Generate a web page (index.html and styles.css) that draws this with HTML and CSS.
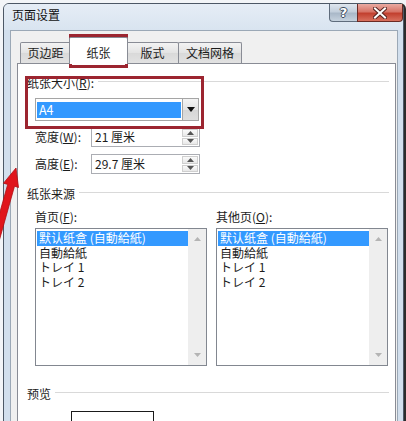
FILE: index.html
```html
<!DOCTYPE html>
<html lang="zh">
<head>
<meta charset="utf-8">
<title>页面设置</title>
<link rel="stylesheet" href="styles.css">
</head>
<body>
<div class="window">
  <div class="titlebar">
    <span class="title">页面设置</span>
    <div class="caption">
      <div class="cbtn help"><span class="qmark">?</span></div>
      <div class="cbtn close">
        <svg width="14" height="12" viewBox="0 0 14 12"><path d="M2 1.5 L12 10.5 M12 1.5 L2 10.5" stroke="#5a2320" stroke-width="4" stroke-linecap="square"/><path d="M2 1.5 L12 10.5 M12 1.5 L2 10.5" stroke="#ffffff" stroke-width="2" stroke-linecap="square"/></svg>
      </div>
    </div>
  </div>
  <div class="client">
    <div class="tabs">
      <div class="tab tab-margins">页边距</div>
      <div class="tab tab-paper active">纸张</div>
      <div class="tab tab-layout">版式</div>
      <div class="tab tab-grid">文档网格</div>
    </div>
    <div class="panel">
      <div class="ghead first"><span>纸张大小(<u>R</u>):</span><span class="rule"></span></div>
      <div class="combo">
        <div class="combo-value">A4</div>
        <div class="combo-btn"><svg width="8" height="5" viewBox="0 0 8 5"><path d="M0 0 H8 L4 5 Z" fill="#111"/></svg></div>
      </div>
      <div class="spin-row">
        <span class="spin-label">宽度(<u>W</u>):</span>
        <div class="spin">
          <span class="spin-value">21 厘米</span>
          <div class="spin-btns">
            <div class="sbtn"><svg width="7" height="4" viewBox="0 0 7 4"><path d="M0 4 H7 L3.5 0 Z" fill="#555"/></svg></div>
            <div class="sbtn"><svg width="7" height="4" viewBox="0 0 7 4"><path d="M0 0 H7 L3.5 4 Z" fill="#555"/></svg></div>
          </div>
        </div>
      </div>
      <div class="spin-row second">
        <span class="spin-label">高度(<u>E</u>):</span>
        <div class="spin">
          <span class="spin-value">29.7 厘米</span>
          <div class="spin-btns">
            <div class="sbtn"><svg width="7" height="4" viewBox="0 0 7 4"><path d="M0 4 H7 L3.5 0 Z" fill="#555"/></svg></div>
            <div class="sbtn"><svg width="7" height="4" viewBox="0 0 7 4"><path d="M0 0 H7 L3.5 4 Z" fill="#555"/></svg></div>
          </div>
        </div>
      </div>
      <div class="ghead source-head"><span>纸张来源</span><span class="rule"></span></div>
      <div class="sources">
        <div class="src-col">
          <div class="src-label">首页(<u>F</u>):</div>
          <div class="listbox">
            <div class="items">
              <div class="item selected">默认纸盒 (自動給紙)</div>
              <div class="item">自動給紙</div>
              <div class="item">トレイ 1</div>
              <div class="item">トレイ 2</div>
            </div>
            <div class="vscroll">
              <div class="arrow"><svg width="7" height="4" viewBox="0 0 7 4"><path d="M0 4 H7 L3.5 0 Z" fill="#b4b4b4"/></svg></div>
              <div class="arrow"><svg width="7" height="4" viewBox="0 0 7 4"><path d="M0 0 H7 L3.5 4 Z" fill="#b4b4b4"/></svg></div>
            </div>
          </div>
        </div>
        <div class="src-col">
          <div class="src-label">其他页(<u>O</u>):</div>
          <div class="listbox">
            <div class="items">
              <div class="item selected">默认纸盒 (自動給紙)</div>
              <div class="item">自動給紙</div>
              <div class="item">トレイ 1</div>
              <div class="item">トレイ 2</div>
            </div>
            <div class="vscroll">
              <div class="arrow"><svg width="7" height="4" viewBox="0 0 7 4"><path d="M0 4 H7 L3.5 0 Z" fill="#b4b4b4"/></svg></div>
              <div class="arrow"><svg width="7" height="4" viewBox="0 0 7 4"><path d="M0 0 H7 L3.5 4 Z" fill="#b4b4b4"/></svg></div>
            </div>
          </div>
        </div>
      </div>
      <div class="ghead preview-head"><span>预览</span><span class="rule"></span></div>
      <div class="preview-page"></div>
    </div>
  </div>
</div>

<div class="mark mark-tab"></div>
<div class="mark mark-size"></div>
<svg class="red-arrow" width="26" height="90" viewBox="0 0 26 90">
  <path d="M16 8 L18.5 27.5 L14.5 26.2 L-4.4 93.6 L-11.2 91.8 L7.7 24.4 L3.5 23.2 Z" fill="#e0151c" stroke="#b00f14" stroke-width="0.8"/>
</svg>
</body>
</html>
```
FILE: styles.css
```css
* { box-sizing: border-box; }
html, body { margin: 0; padding: 0; }
body {
  position: relative;
  width: 406px;
  height: 421px;
  overflow: hidden;
  background: #f3f5f8;
  font-family: "Noto Sans CJK SC", "Noto Sans", sans-serif;
  font-size: 12px;
  color: #1c1c1c;
}
u { text-decoration: underline; text-underline-offset: 1px; }

.window {
  margin: 3px 0 0 3px;
  width: 401px;
  height: 440px;
  border: 1px solid #4d5866;
  border-radius: 6px 6px 0 0;
  background: #d2dfed;
  display: flex;
  flex-direction: column;
  box-shadow: 2px 0 0 #2b2b2b;
}
.titlebar {
  height: 26px;
  flex: none;
  display: flex;
  justify-content: space-between;
  align-items: flex-start;
  background: linear-gradient(#e6edf6, #d9e4f0);
  border-radius: 5px 5px 0 0;
}
.title {
  padding-left: 8px;
  line-height: 22px;
  color: #111;
}
.caption { display: flex; }
.cbtn {
  height: 18px;
  display: flex;
  align-items: center;
  justify-content: center;
  border: 1px solid #5f6c7c;
  border-top: none;
}
.help {
  width: 28px;
  border-right: none;
  border-radius: 0 0 0 4px;
  background: linear-gradient(#dfe6ee 0%, #c3cfdc 45%, #a9b8c8 55%, #c6d2de 100%);
}
.qmark {
  font-family: "DejaVu Sans", sans-serif;
  font-weight: bold;
  font-size: 13px;
  line-height: 14px;
  color: #fff;
  text-shadow: -1px 0 #3d4a5c, 1px 0 #3d4a5c, 0 -1px #3d4a5c, 0 1px #3d4a5c;
}
.close {
  width: 46px;
  border-radius: 0 0 4px 0;
  border-color: #6a2a25;
  background: linear-gradient(#e9aaa2 0%, #d77467 45%, #c2402f 55%, #d8705e 100%);
}

.client {
  flex: 1;
  margin: 0 5px 0 6px;
  border: 1px solid #9ba8b6;
  border-bottom: none;
  background: #f0f0f0;
  display: flex;
  flex-direction: column;
}
.tabs {
  flex: none;
  height: 32px;
  padding: 6px 0 0 9px;
  display: flex;
  align-items: flex-end;
}
.tab {
  height: 21px;
  border: 1px solid #898c95;
  border-bottom: none;
  border-radius: 2px 2px 0 0;
  background: linear-gradient(#f3f3f3, #e3e3e3 50%, #d9d9d9 51%, #e2e2e2);
  text-align: center;
  line-height: 19px;
  color: #1c1c1c;
}
.tab-margins { width: 51px; }
.tab-paper { width: 59px; margin: 0 -2px; }
.tab-layout { width: 53px; }
.tab-grid { width: 64px; margin-left: -1px; }
.tab.active {
  position: relative;
  z-index: 2;
  height: 27px;
  margin-bottom: -1px;
  background: #ffffff;
  line-height: 29px;
}

.panel {
  flex: 1;
  margin: 0 1px 0 6px;
  border: 1px solid #898c95;
  border-bottom: none;
  background: #ffffff;
  padding: 0 6px 0 9px;
}
.ghead {
  display: flex;
  height: 14px;
  line-height: 14px;
  white-space: nowrap;
}
.ghead .rule {
  flex: 1;
  height: 1px;
  margin: 5px 0 0 4px;
  background: #d9d9d9;
}
.ghead.first { margin-top: 12px; }
.source-head { margin-top: 13px; }
.preview-head { margin-top: 21px; }

.combo {
  margin: 8px 0 0 8px;
  width: 164px;
  height: 23px;
  border: 1px solid #a5a5a5;
  display: flex;
  background: #fff;
}
.combo-value {
  flex: 1;
  margin: 3px 1px 2px 1px;
  background: #3399ff;
  color: #fff;
  line-height: 15px;
  padding-left: 2px;
  font-size: 12.5px;
}
.combo-btn {
  width: 16px;
  border-left: 1px solid #a5a5a5;
  background: linear-gradient(#f4f4f4, #e4e4e4 50%, #d6d6d6 51%, #dedede);
  display: flex;
  align-items: center;
  justify-content: center;
}

.spin-row {
  display: flex;
  align-items: center;
  margin: 6px 0 0 8px;
}
.spin-row.second { margin-top: 7px; }
.spin-label { width: 56px; line-height: 14px; }
.spin {
  width: 109px;
  height: 20px;
  border: 1px solid #abadb3;
  display: flex;
  background: #fff;
}
.spin-value {
  flex: 1;
  padding-left: 3px;
  line-height: 18px;
}
.spin-btns {
  width: 16px;
  margin: 1px 1px 1px 0;
  display: flex;
  flex-direction: column;
  gap: 1px;
}
.sbtn {
  flex: 1;
  border: 1px solid #cfcfcf;
  background: linear-gradient(#fafafa, #e8e8e8);
  display: flex;
  align-items: center;
  justify-content: center;
}

.sources {
  display: flex;
  gap: 9px;
  margin-left: 8px;
}
.src-col { width: 172px; }
.src-label {
  margin-top: 9px;
  line-height: 14px;
}
.listbox {
  margin-top: 4px;
  height: 138px;
  border: 1px solid #828790;
  display: flex;
  background: #fff;
}
.items {
  flex: 1;
  padding: 2px 0 0 1px;
}
.item {
  height: 14.5px;
  line-height: 14.5px;
  padding-left: 2px;
  white-space: nowrap;
}
.item.selected {
  background: #3399ff;
  color: #fff;
}
.vscroll {
  width: 18px;
  background: #eeeeee;
  display: flex;
  flex-direction: column;
  justify-content: space-between;
  padding: 6px 0 6px;
}
.arrow {
  height: 8px;
  display: flex;
  align-items: center;
  justify-content: center;
}

.preview-page {
  margin: 10px 0 0 44px;
  width: 83px;
  height: 40px;
  border: 1px solid #1a1a1a;
  border-bottom: none;
  background: #fff;
}

.mark {
  position: absolute;
  border: 3px solid #9c2530;
  pointer-events: none;
}
.mark-tab { left: 69px; top: 34px; width: 59px; height: 34px; }
.mark-size { left: 25px; top: 76px; width: 179px; height: 53px; }
.red-arrow {
  position: absolute;
  left: 0;
  top: 160px;
}
```
